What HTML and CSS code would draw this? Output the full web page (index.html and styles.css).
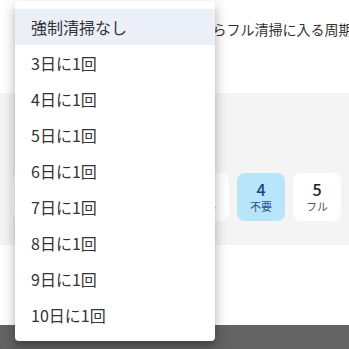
FILE: index.html
```
<!DOCTYPE html>
<html lang="ja">
<head>
    <meta charset="UTF-8">
    <meta name="viewport" content="width=device-width, initial-scale=1.0">
    <title>清掃周期の設定</title>
    <link rel="stylesheet" href="styles.css">
</head>
<body>

    <!-- Settings page behind the menu -->
    <main class="page">
        <header class="page-head">
            <p class="page-desc">最後の強制清掃を実行してからフル清掃に入る周期</p>
        </header>

        <section class="day-panel">
            <div class="day-row">
                <div class="day-card"><span class="day-num">0</span><span class="day-label">フル</span></div>
                <div class="day-card"><span class="day-num">1</span><span class="day-label">不要</span></div>
                <div class="day-card"><span class="day-num">2</span><span class="day-label">不要</span></div>
                <div class="day-card"><span class="day-num">3</span><span class="day-label">フル</span></div>
                <div class="day-card active"><span class="day-num">4</span><span class="day-label">不要</span></div>
                <div class="day-card"><span class="day-num">5</span><span class="day-label">フル</span></div>
                <div class="day-card active"><span class="day-num">6</span><span class="day-label">不要</span></div>
            </div>
        </section>

        <div class="page-foot"></div>
        <div class="bottom-bar"></div>
    </main>

    <!-- Select menu -->
    <ul class="select-menu">
        <li class="menu-item selected">強制清掃なし</li>
        <li class="menu-item">3日に1回</li>
        <li class="menu-item">4日に1回</li>
        <li class="menu-item">5日に1回</li>
        <li class="menu-item">6日に1回</li>
        <li class="menu-item">7日に1回</li>
        <li class="menu-item">8日に1回</li>
        <li class="menu-item">9日に1回</li>
        <li class="menu-item">10日に1回</li>
    </ul>

</body>
</html>
```
FILE: styles.css
```
/* Base */
body {
    margin: 0;
    background: #fff;
    font-family: "Noto Sans CJK JP", "Noto Sans", sans-serif;
    color: #333;
    overflow: hidden;
}

.page {
    display: flex;
    flex-direction: column;
    height: 349px;
    overflow: hidden;
}

/* Header text */
.page-head {
    height: 93px;
    padding: 19px 0 0 31px;
    box-sizing: border-box;
    overflow: hidden;
}

.page-desc {
    margin: 0;
    font-size: 14px;
    line-height: 20px;
    white-space: nowrap;
    color: #333;
}

/* Day cards */
.day-panel {
    height: 152px;
    background: #f4f4f4;
    padding: 80px 0 0 13px;
    box-sizing: border-box;
    overflow: hidden;
}

.day-row {
    display: flex;
    gap: 8px;
}

.day-card {
    flex: 0 0 48px;
    height: 48px;
    border-radius: 8px;
    background: #fff;
    display: flex;
    flex-direction: column;
    align-items: center;
    justify-content: center;
}

.day-card.active {
    background: #b9e5fb;
}

.day-num {
    font-size: 16px;
    line-height: 19px;
    font-weight: 500;
    color: #222;
}

.day-label {
    font-size: 11px;
    line-height: 15px;
    color: #555;
}

.day-card.active .day-num {
    color: #1f3f8f;
}

.day-card.active .day-label {
    color: #2f4f9a;
}

.page-foot {
    height: 80px;
}

.bottom-bar {
    flex: 1;
    background: #636363;
}

/* Menu */
.select-menu {
    position: absolute;
    top: 1px;
    left: 15px;
    width: 200px;
    margin: 0;
    padding: 8px 0;
    list-style: none;
    background: #fff;
    border-radius: 4px;
    box-shadow: 0 5px 5px -3px rgba(0, 0, 0, 0.2),
                0 8px 10px 1px rgba(0, 0, 0, 0.14),
                0 3px 14px 2px rgba(0, 0, 0, 0.12);
}

.menu-item {
    height: 36px;
    padding-left: 16px;
    display: flex;
    align-items: center;
    font-size: 16px;
    color: #333;
}

.menu-item.selected {
    background: #ebeff7;
}
```
